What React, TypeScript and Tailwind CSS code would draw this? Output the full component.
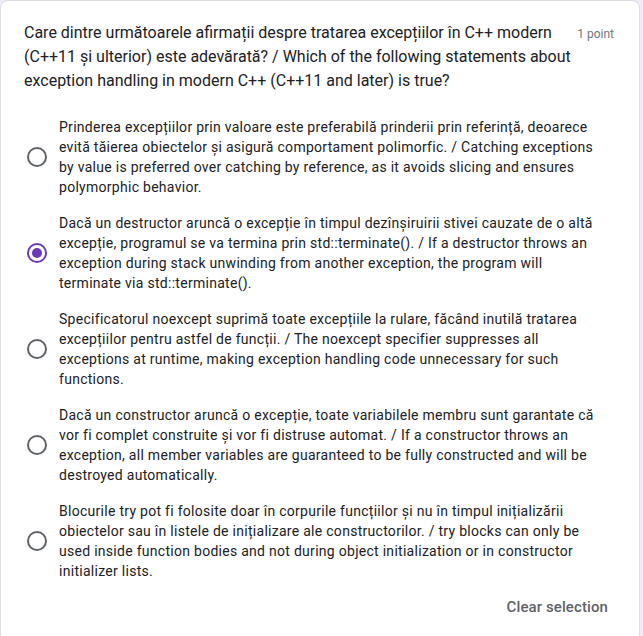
import { useState } from "react";

const options = [
  "Prinderea excepțiilor prin valoare este preferabilă prinderii prin referință, deoarece evită tăierea obiectelor și asigură comportament polimorfic. / Catching exceptions by value is preferred over catching by reference, as it avoids slicing and ensures polymorphic behavior.",
  "Dacă un destructor aruncă o excepție în timpul dezînșiruirii stivei cauzate de o altă excepție, programul se va termina prin std::terminate(). / If a destructor throws an exception during stack unwinding from another exception, the program will terminate via std::terminate().",
  "Specificatorul noexcept suprimă toate excepțiile la rulare, făcând inutilă tratarea excepțiilor pentru astfel de funcții. / The noexcept specifier suppresses all exceptions at runtime, making exception handling code unnecessary for such functions.",
  "Dacă un constructor aruncă o excepție, toate variabilele membru sunt garantate că vor fi complet construite și vor fi distruse automat. / If a constructor throws an exception, all member variables are guaranteed to be fully constructed and will be destroyed automatically.",
  "Blocurile try pot fi folosite doar în corpurile funcțiilor și nu în timpul inițializării obiectelor sau în listele de inițializare ale constructorilor. / try blocks can only be used inside function bodies and not during object initialization or in constructor initializer lists.",
];

export default function App() {
  const [picked, setPicked] = useState<number | null>(1);

  return (
    <main
      className="min-h-screen bg-[#f0ebf8] pr-[3px]"
      style={{ fontFamily: "Roboto, Arial, sans-serif" }}
    >
      <div className="min-h-[640px] rounded-t-lg border border-[#dadce0] bg-white pt-[20px] pl-[23px] pr-[23px]">
        {/* QUESTION */}
        <div className="flex items-start gap-1">
          <h2 className="flex-1 text-[16px] leading-6 tracking-[0px] text-[#202124]">
            Care dintre următoarele afirmații despre tratarea excepțiilor în C++ modern
            (C++11 și ulterior) este adevărată? / Which of the following statements about
            exception handling in modern C++ (C++11 and later) is true?
          </h2>
          <span className="pt-[3px] pr-[2px] text-[12px] leading-5 text-[#70757a]">1 point</span>
        </div>

        {/* OPTIONS */}
        <div className="mt-4 flex flex-col">
          {options.map((text, i) => {
            const on = picked === i;
            return (
              <label
                key={i}
                onClick={() => setPicked(i)}
                className="flex cursor-pointer items-center py-2"
              >
                <span className="flex w-[35px] shrink-0 items-center pl-[3px]">
                  <span
                    className={
                      on
                        ? "flex h-5 w-5 items-center justify-center rounded-full border-2 border-[#673ab7]"
                        : "flex h-5 w-5 items-center justify-center rounded-full border-2 border-[#5f6368]"
                    }
                  >
                    {on && <span className="h-[10px] w-[10px] rounded-full bg-[#673ab7]" />}
                  </span>
                </span>
                <span className="flex-1 pr-[8px] text-[14px] leading-5 tracking-[0.28px] text-[#202124]">
                  {text}
                </span>
              </label>
            );
          })}
        </div>

        {/* CLEAR */}
        <div className="flex justify-end">
          <button
            onClick={() => setPicked(null)}
            className="px-2 py-2 text-[15px] font-medium leading-5 tracking-[0.1px] text-[#5f6368]"
          >
            Clear selection
          </button>
        </div>
      </div>
    </main>
  );
}
